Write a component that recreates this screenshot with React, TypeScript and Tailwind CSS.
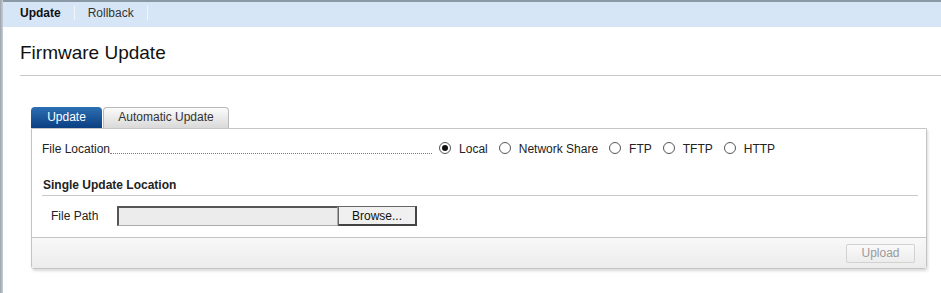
import React from "react";

function Radio({ checked }: { checked?: boolean }) {
  return (
    <span className="inline-flex w-[12px] h-[12px] rounded-full border border-[#555] bg-white items-center justify-center relative top-[-4px]">
      {checked && <span className="w-[6px] h-[6px] rounded-full bg-[#111]" />}
    </span>
  );
}

export default function App() {
  return (
    <div
      className="w-[941px] h-[293px] bg-white flex overflow-hidden text-[12px] text-[#222]"
      style={{ fontFamily: '"Liberation Sans", Arial, sans-serif' }}
    >
      <div className="w-[3px] bg-gradient-to-r from-[#9aa3ad] to-[#c9cfd6] shrink-0" />
      <div className="flex-1 flex flex-col">
        <div className="h-[27px] bg-[#d7e6f7] border-t-2 border-[#8b98a6] flex items-center pb-[4px] pl-[17px] text-[12px]">
          <span className="font-bold text-[#111]">Update</span>
          <span className="mx-[13px] w-px h-[14px] bg-[#f2f6fb]" />
          <span className="text-[#333]">Rollback</span>
          <span className="ml-[13px] w-px h-[14px] bg-[#f2f6fb]" />
        </div>
        <div className="pl-[17px] pt-[14px]">
          <div className="text-[19px] text-[#111] leading-[24px]">Firmware Update</div>
          <div className="mt-[10px] h-px bg-[#c8c8c8]" />
        </div>
        <div className="pl-[28px] pr-[14px] pt-[31px]">
          <div className="flex items-end h-[21px]">
            <div className="w-[71px] h-[21px] rounded-t-[4px] bg-gradient-to-b from-[#2d6fb3] to-[#0b3f82] text-white flex items-center justify-center pb-[2px]">
              Update
            </div>
            <div className="ml-[1px] w-[126px] h-[21px] rounded-t-[4px] border border-[#b9b9b9] border-b-0 bg-gradient-to-b from-[#fbfbfb] to-[#d9d9d9] text-[#333] flex items-center justify-center pb-[2px]">
              Automatic Update
            </div>
          </div>
          <div className="border border-[#c4c4c4] rounded-b-[3px] shadow-[1px_2px_3px_rgba(0,0,0,0.15)]">
            <div className="px-[10px] pt-[9px] pb-[11px]">
              <div className="flex items-end h-[20px]">
                <span>File Location</span>
                <span className="w-[322px] border-b border-dotted border-[#777] mb-[4px] mr-[7px]" />
                <span className="flex items-end">
                  <Radio checked />
                  <span className="ml-[8px] mr-[11px]">Local</span>
                  <Radio />
                  <span className="ml-[8px] mr-[11px]">Network Share</span>
                  <Radio />
                  <span className="ml-[8px] mr-[11px]">FTP</span>
                  <Radio />
                  <span className="ml-[8px] mr-[11px]">TFTP</span>
                  <Radio />
                  <span className="ml-[8px]">HTTP</span>
                </span>
              </div>
              <div className="mt-[20px] font-bold text-[#222] pl-[1px] leading-[15px]">
                Single Update Location
              </div>
              <div className="mt-[2px] h-px bg-[#c8c8c8] mr-[-2px]" />
              <div className="flex items-center mt-[10px] pl-[9px]">
                <span className="w-[66px]">File Path</span>
                <div className="w-[221px] h-[20px] bg-[#ececec] border-t-2 border-l-2 border-[#555] border-b border-r border-b-[#aaa] border-r-[#aaa]" />
                <div className="w-[79px] h-[20px] bg-[#f0f0f0] border border-[#666] border-r-2 border-b-2 border-r-[#444] border-b-[#444] flex items-center justify-center text-[#111]">
                  Browse...
                </div>
              </div>
            </div>
            <div className="h-[31px] border-t border-[#c4c4c4] bg-gradient-to-b from-[#f8f8f8] to-[#ececec] flex items-center justify-end pr-[11px]">
              <div className="w-[69px] h-[19px] border border-[#d2d2d2] rounded-[2px] bg-gradient-to-b from-[#fafafa] to-[#ececec] text-[#9a9a9a] flex items-center justify-center">
                Upload
              </div>
            </div>
          </div>
        </div>
      </div>
    </div>
  );
}
